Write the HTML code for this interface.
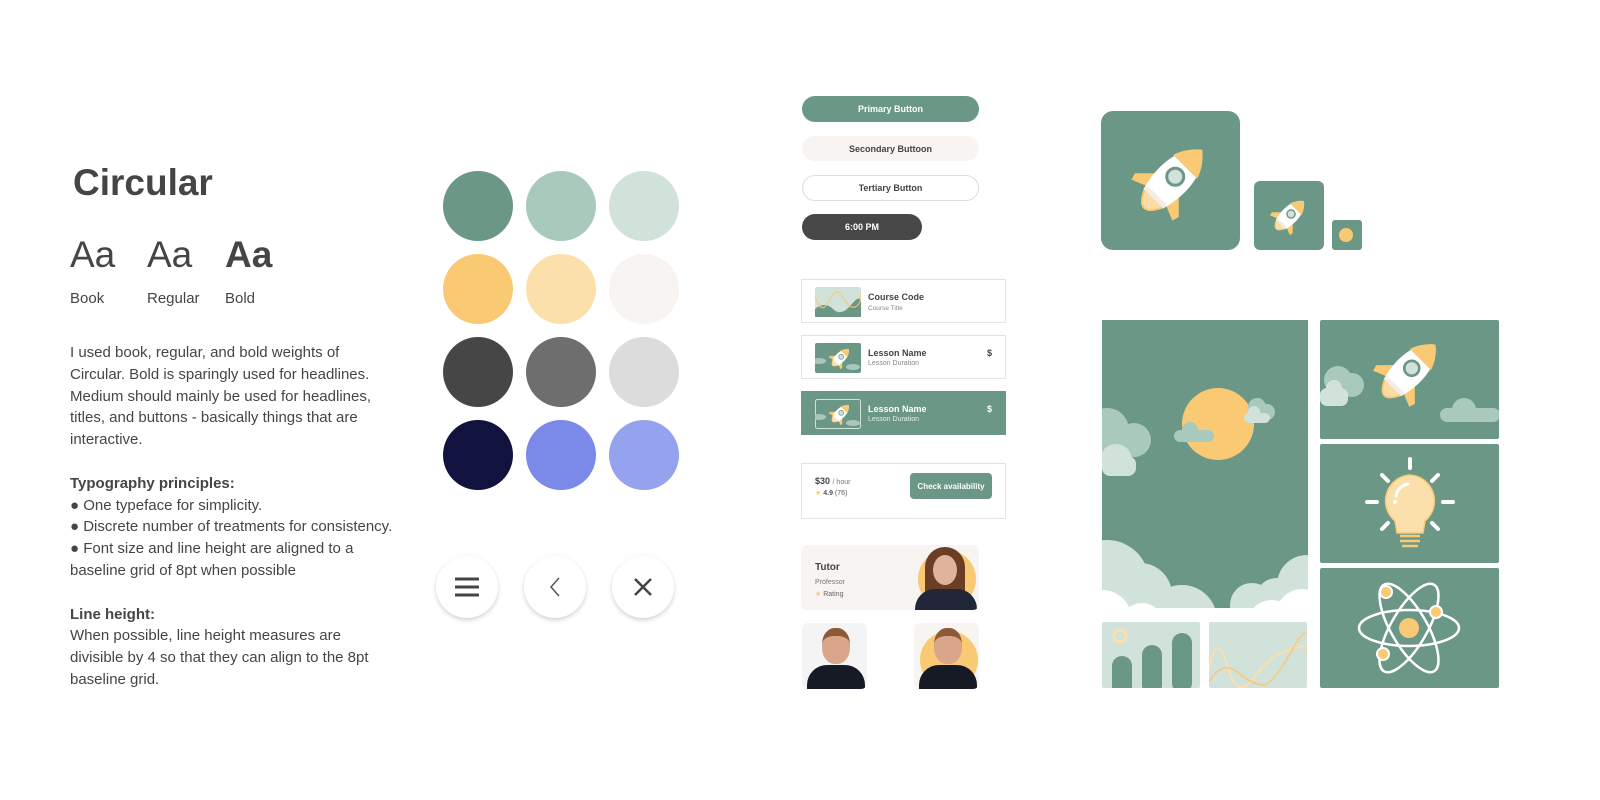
<!DOCTYPE html>
<html><head><meta charset="utf-8"><style>
*{margin:0;padding:0;box-sizing:border-box}
body{width:1600px;height:800px;background:#fff;position:relative;overflow:hidden;font-family:"Liberation Sans",sans-serif;color:#444}
.a{position:absolute}
.c{position:absolute;width:70px;height:70px;border-radius:50%}
.rb{position:absolute;width:62px;height:62px;border-radius:50%;background:#fff;box-shadow:0 2px 5px rgba(0,0,0,.18);display:flex;align-items:center;justify-content:center}
.btn{position:absolute;border-radius:14px;font-size:9px;font-weight:bold;display:flex;align-items:center;justify-content:center}
.card{position:absolute;left:801px;width:205px;border:1px solid #e4e4e4;background:#fff}
.g{background:#6b9787}
</style></head><body>
<svg width="0" height="0" style="position:absolute">
<defs>
<g id="rk">
<g transform="rotate(45 50 50)">
<path d="M37 74 Q50 102 63 74 Z" fill="#fcdca6" stroke="#f9c974" stroke-width="2"/>
<path d="M35 54 L19 70 L21 77 L38 70 Z" fill="#f9c974"/>
<path d="M65 54 L81 70 L79 77 L62 70 Z" fill="#f9c974"/>
<path d="M50 6 C69 20 71 50 64 74 L36 74 C29 50 31 20 50 6 Z" fill="#fff"/>
<path d="M50 6 C59 13 64 21 67 30 L33 30 C36 21 41 13 50 6 Z" fill="#f9c974"/>
<rect x="36" y="70" width="28" height="5" fill="#f3ece8"/>
<circle cx="50" cy="44" r="8.5" fill="#d1e2da" stroke="#6b9787" stroke-width="3"/>
</g></g>
</defs></svg>

<div class="a" style="left:73px;top:162px;font-size:37px;font-weight:bold;color:#454545">Circular</div>
<div class="a" style="left:70px;top:234px;font-size:37px;color:#454545">Aa</div>
<div class="a" style="left:147px;top:234px;font-size:37px;color:#454545">Aa</div>
<div class="a" style="left:225px;top:234px;font-size:37px;font-weight:bold;color:#454545">Aa</div>
<div class="a" style="left:70px;top:290px;font-size:15px">Book</div>
<div class="a" style="left:147px;top:290px;font-size:15px">Regular</div>
<div class="a" style="left:225px;top:290px;font-size:15px">Bold</div>
<div class="a" style="left:70px;top:342px;font-size:15px;line-height:21.8px;white-space:nowrap;color:#454545">
I used book, regular, and bold weights of<br>Circular. Bold is sparingly used for headlines.<br>Medium should mainly be used for headlines,<br>titles, and buttons - basically things that are<br>interactive.<br><br><b>Typography principles:</b><br>● One typeface for simplicity.<br>● Discrete number of treatments for consistency.<br>● Font size and line height are aligned to a<br>baseline grid of 8pt when possible<br><br><b>Line height:</b><br>When possible, line height measures are<br>divisible by 4 so that they can align to the 8pt<br>baseline grid.</div>

<div class="c" style="left:443px;top:171px;background:#6b9787"></div>
<div class="c" style="left:526px;top:171px;background:#a9c9bd"></div>
<div class="c" style="left:609px;top:171px;background:#d1e2da"></div>
<div class="c" style="left:443px;top:254px;background:#f9c974"></div>
<div class="c" style="left:526px;top:254px;background:#fce0ac"></div>
<div class="c" style="left:609px;top:254px;background:#f8f4f1"></div>
<div class="c" style="left:443px;top:337px;background:#464646"></div>
<div class="c" style="left:526px;top:337px;background:#6e6e6e"></div>
<div class="c" style="left:609px;top:337px;background:#dcdcdc"></div>
<div class="c" style="left:443px;top:420px;background:#12123f"></div>
<div class="c" style="left:526px;top:420px;background:#7b89e8"></div>
<div class="c" style="left:609px;top:420px;background:#95a2ee"></div>

<div class="rb" style="left:436px;top:556px"><svg width="26" height="22"><path d="M1 3H25M1 11H25M1 19H25" stroke="#444" stroke-width="3"/></svg></div>
<div class="rb" style="left:524px;top:556px"><svg width="14" height="22"><path d="M11 2L3 11L11 20" stroke="#555" stroke-width="1.5" fill="none"/></svg></div>
<div class="rb" style="left:612px;top:556px"><svg width="20" height="20"><path d="M2 2L18 18M18 2L2 18" stroke="#444" stroke-width="2.5"/></svg></div>

<div class="btn g" style="left:802px;top:96px;width:177px;height:26px;color:#fff">Primary Button</div>
<div class="btn" style="left:802px;top:136px;width:177px;height:25px;background:#f8f4f1">Secondary Buttoon</div>
<div class="btn" style="left:802px;top:175px;width:177px;height:26px;border:1px solid #ddd">Tertiary Button</div>
<div class="btn" style="left:802px;top:214px;width:120px;height:26px;background:#474747;color:#fff">6:00 PM</div>

<div class="card" style="top:279px;height:44px">
<svg class="a" style="left:13px;top:7px" width="46" height="30"><rect width="46" height="30" rx="2" fill="#d1e2da"/><path d="M0 22 Q10 14 18 22 T36 18 T46 16 V30 H0Z" fill="#6b9787"/><path d="M0 8 Q6 30 14 14 T28 10 T40 20 T46 6" stroke="#f9c974" fill="none"/></svg>
<div class="a" style="left:66px;top:12px;font-size:9px;font-weight:bold">Course Code</div>
<div class="a" style="left:66px;top:25px;font-size:6.5px;color:#888">Course Title</div></div>
<div class="card" style="top:335px;height:44px">
<svg class="a" style="left:13px;top:7px" width="46" height="30"><rect width="46" height="30" rx="2" fill="#6b9787"/><ellipse cx="4" cy="18" rx="7" ry="3" fill="#a9c9bd"/><ellipse cx="38" cy="24" rx="7" ry="3" fill="#a9c9bd"/><use href="#rk" transform="translate(11 1) scale(.28)"/></svg>
<div class="a" style="left:66px;top:12px;font-size:9px;font-weight:bold">Lesson Name</div>
<div class="a" style="left:66px;top:24px;font-size:7px;color:#888">Lesson Duration</div>
<div class="a" style="left:185px;top:12px;font-size:9px;font-weight:bold">$</div></div>
<div class="card g" style="top:391px;height:44px;border-color:#6b9787">
<svg class="a" style="left:13px;top:7px" width="46" height="30"><rect x=".5" y=".5" width="45" height="29" rx="2" fill="#6b9787" stroke="#d1e2da"/><ellipse cx="4" cy="18" rx="7" ry="3" fill="#a9c9bd"/><ellipse cx="38" cy="24" rx="7" ry="3" fill="#a9c9bd"/><use href="#rk" transform="translate(11 1) scale(.28)"/></svg>
<div class="a" style="left:66px;top:12px;font-size:9px;font-weight:bold;color:#fff">Lesson Name</div>
<div class="a" style="left:66px;top:24px;font-size:7px;color:#e6efea">Lesson Duration</div>
<div class="a" style="left:185px;top:12px;font-size:9px;font-weight:bold;color:#fff">$</div></div>
<div class="card" style="top:463px;height:56px">
<div class="a" style="left:13px;top:12px;font-size:9px"><b>$30</b> <span style="font-size:7px;color:#777">/ hour</span></div>
<div class="a" style="left:13px;top:25px;font-size:7px;color:#555"><span style="color:#f9c974">★</span> <b>4.9</b> (76)</div>
<div class="btn g" style="left:108px;top:9px;width:82px;height:26px;border-radius:4px;color:#fff;font-size:8px">Check availability</div></div>

<div class="a" style="left:801px;top:545px;width:178px;height:65px;background:#f8f4f1;border-radius:6px;overflow:hidden">
<div class="a" style="left:14px;top:17px;font-size:10px;font-weight:bold">Tutor</div>
<div class="a" style="left:14px;top:34px;font-size:7px;color:#777">Professor</div>
<div class="a" style="left:14px;top:45px;font-size:7px;color:#666"><span style="color:#f9c974">★</span> Rating</div>
<div class="a" style="left:117px;top:5px;width:58px;height:58px;border-radius:50%;background:#f9c974"></div>
<div class="a" style="left:124px;top:2px;width:40px;height:70px;border-radius:20px 20px 0 0;background:#6a3f26"></div>
<div class="a" style="left:132px;top:10px;width:24px;height:30px;border-radius:50%;background:#e0b49a"></div>
<div class="a" style="left:114px;top:44px;width:62px;height:30px;border-radius:20px 20px 0 0;background:#1f2738"></div></div>
<div class="a" style="left:802px;top:623px;width:65px;height:66px;background:#f4f4f4;border-radius:6px;overflow:hidden">
<div class="a" style="left:20px;top:5px;width:28px;height:36px;border-radius:45%;background:#d9a68a;border-top:8px solid #8c5a36"></div>
<div class="a" style="left:5px;top:42px;width:58px;height:30px;border-radius:20px 20px 0 0;background:#161a24"></div></div>
<div class="a" style="left:914px;top:623px;width:65px;height:66px;background:#f8f4f1;border-radius:6px;overflow:hidden">
<div class="a" style="left:6px;top:8px;width:58px;height:58px;border-radius:50%;background:#f9c974"></div>
<div class="a" style="left:20px;top:5px;width:28px;height:36px;border-radius:45%;background:#d9a68a;border-top:8px solid #8c5a36"></div>
<div class="a" style="left:5px;top:42px;width:58px;height:30px;border-radius:20px 20px 0 0;background:#161a24"></div></div>

<svg class="a" style="left:1101px;top:111px" width="139" height="139"><rect width="139" height="139" rx="12" fill="#6b9787"/><use href="#rk" transform="translate(20 20) scale(1)"/></svg>
<svg class="a" style="left:1254px;top:181px" width="70" height="69"><rect width="70" height="69" rx="6" fill="#6b9787"/><use href="#rk" transform="translate(11 11) scale(.48)"/></svg>
<svg class="a" style="left:1332px;top:220px" width="30" height="30"><rect width="30" height="30" rx="3" fill="#6b9787"/><circle cx="14" cy="15" r="7" fill="#f9c974"/></svg>

<svg class="a" style="left:1102px;top:320px" width="397" height="368">
<defs><clipPath id="cp"><rect width="206" height="288"/></clipPath><clipPath id="cp2"><rect x="107" y="302" width="98" height="66"/></clipPath></defs>
<g clip-path="url(#cp)">
<rect width="206" height="288" fill="#6b9787"/>
<circle cx="116" cy="104" r="36" fill="#f9c974"/>
<g fill="#a9c9bd"><circle cx="5" cy="110" r="22"/><circle cx="32" cy="120" r="17"/><circle cx="155" cy="87" r="9"/><circle cx="165" cy="92" r="8"/><rect x="72" y="110" width="40" height="12" rx="6"/><circle cx="88" cy="110" r="8"/></g>
<g fill="#d1e2da"><circle cx="14" cy="140" r="16"/><rect x="0" y="136" width="34" height="20" rx="8"/><rect x="142" y="93" width="26" height="10" rx="5"/><circle cx="152" cy="92" r="6"/>
<circle cx="5" cy="262" r="42"/><circle cx="38" cy="275" r="32"/><circle cx="80" cy="300" r="35"/><circle cx="150" cy="285" r="22"/><circle cx="175" cy="280" r="22"/><circle cx="205" cy="265" r="30"/></g>
<g fill="#fff"><circle cx="0" cy="300" r="30"/><circle cx="40" cy="305" r="22"/><circle cx="60" cy="310" r="22"/><circle cx="170" cy="305" r="25"/><circle cx="200" cy="295" r="26"/></g>
</g>
<rect x="0" y="302" width="98" height="66" rx="2" fill="#d1e2da"/>
<g fill="#6b9787"><rect x="10" y="336" width="20" height="40" rx="10"/><rect x="40" y="325" width="20" height="50" rx="10"/><rect x="70" y="313" width="20" height="60" rx="10"/></g>
<circle cx="18" cy="316" r="6" fill="none" stroke="#fce0ac" stroke-width="3"/>
<rect x="107" y="302" width="98" height="66" rx="2" fill="#d1e2da"/>
<g clip-path="url(#cp2)">
<path d="M107 350 Q115 310 125 345 T150 360 T175 335 T205 325" stroke="#fce0ac" stroke-width="2" fill="none"/>
<path d="M107 362 Q120 340 135 352 T160 365 T190 330 T205 335" stroke="#f9c974" stroke-width="1.5" fill="none"/>
</g>
<rect x="218" y="0" width="179" height="119" rx="2" fill="#6b9787"/>
<g fill="#a9c9bd"><circle cx="236" cy="60" r="14"/><circle cx="250" cy="65" r="12"/><rect x="338" y="88" width="60" height="14" rx="7"/><circle cx="362" cy="90" r="12"/></g>
<g fill="#d1e2da"><rect x="218" y="68" width="28" height="18" rx="7"/><circle cx="232" cy="68" r="8"/></g>
<use href="#rk" transform="translate(262 8) scale(.88)"/>
<rect x="218" y="124" width="179" height="119" rx="2" fill="#6b9787"/>
<g stroke="#fff" stroke-width="4" stroke-linecap="round"><path d="M308 139V148M265 182H275M341 182H351M280 155L286 161M336 155L330 161M280 209L286 203M336 209L330 203"/></g>
<path d="M308 155a26 26 0 0 1 15 46 l-2 12h-26l-2-12a26 26 0 0 1 15-46z" fill="#fce0ac" stroke="#f9c974" stroke-width="1.5"/>
<path d="M294 176a15 15 0 0 1 12-12" stroke="#fff" stroke-width="3" fill="none" stroke-linecap="round"/>
<circle cx="293" cy="182" r="2" fill="#fff"/>
<g stroke="#f9c974" stroke-width="2.5"><path d="M298 216H318M298 221H318M300 226H316"/></g>
<rect x="218" y="248" width="179" height="120" rx="2" fill="#6b9787"/>
<g fill="none" stroke="#fff" stroke-width="2.5"><ellipse cx="307" cy="308" rx="50" ry="18"/><ellipse cx="307" cy="308" rx="50" ry="18" transform="rotate(60 307 308)"/><ellipse cx="307" cy="308" rx="50" ry="18" transform="rotate(-60 307 308)"/></g>
<circle cx="307" cy="308" r="10" fill="#f9c974"/>
<g fill="#f9c974" stroke="#fff" stroke-width="2"><circle cx="334" cy="292" r="6"/><circle cx="284" cy="272" r="6"/><circle cx="281" cy="334" r="6"/></g>
</svg>
</body></html>
